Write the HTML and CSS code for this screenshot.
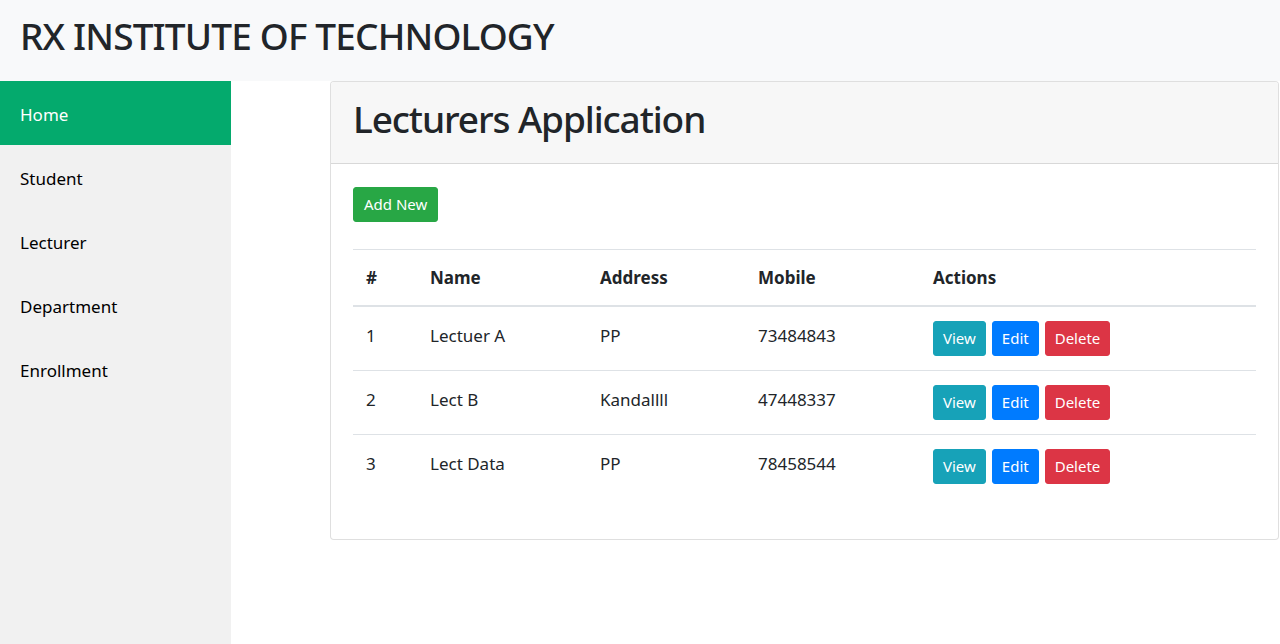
FILE: index.html
```html
<!DOCTYPE html>
<html lang="en">
<head>
<meta charset="utf-8">
<title>Lecturers Application</title>
<link rel="stylesheet" href="styles.css">
</head>
<body>
<header class="topbar">
  <h1 class="brand">RX INSTITUTE OF TECHNOLOGY</h1>
</header>
<div class="layout">
  <nav class="sidebar">
    <a class="nav-link active" href="#">Home</a>
    <a class="nav-link" href="#">Student</a>
    <a class="nav-link" href="#">Lecturer</a>
    <a class="nav-link" href="#">Department</a>
    <a class="nav-link" href="#">Enrollment</a>
  </nav>
  <main class="content">
    <section class="card">
      <div class="card-header">
        <h1 class="card-title">Lecturers Application</h1>
      </div>
      <div class="card-body">
        <div class="toolbar">
          <a class="btn btn-success" href="#">Add New</a>
        </div>
        <table class="table">
          <colgroup>
            <col class="c-num">
            <col class="c-name">
            <col class="c-addr">
            <col class="c-mobile">
            <col>
          </colgroup>
          <thead>
            <tr><th>#</th><th>Name</th><th>Address</th><th>Mobile</th><th>Actions</th></tr>
          </thead>
          <tbody>
            <tr>
              <td>1</td><td>Lectuer A</td><td>PP</td><td>73484843</td>
              <td><div class="actions"><a class="btn btn-info" href="#">View</a><a class="btn btn-primary" href="#">Edit</a><a class="btn btn-danger" href="#">Delete</a></div></td>
            </tr>
            <tr>
              <td>2</td><td>Lect B</td><td>Kandallll</td><td>47448337</td>
              <td><div class="actions"><a class="btn btn-info" href="#">View</a><a class="btn btn-primary" href="#">Edit</a><a class="btn btn-danger" href="#">Delete</a></div></td>
            </tr>
            <tr>
              <td>3</td><td>Lect Data</td><td>PP</td><td>78458544</td>
              <td><div class="actions"><a class="btn btn-info" href="#">View</a><a class="btn btn-primary" href="#">Edit</a><a class="btn btn-danger" href="#">Delete</a></div></td>
            </tr>
          </tbody>
        </table>
      </div>
    </section>
  </main>
</div>
</body>
</html>
```
FILE: styles.css
```css
* { box-sizing: border-box; }

html, body {
  margin: 0;
  height: 100%;
}

body {
  font-family: "Noto Sans", "Open Sans", "Liberation Sans", sans-serif;
  font-size: 17px;
  line-height: 1.5;
  color: #212529;
  background: #fff;
  display: flex;
  flex-direction: column;
}

.topbar {
  background: #f8f9fa;
  height: 81px;
  padding: 0 20px 8px;
  display: flex;
  align-items: center;
  flex-shrink: 0;
}

.brand {
  margin: 0;
  font-size: 37px;
  font-weight: 500;
  line-height: 1.2;
  letter-spacing: -0.85px;
}

.layout {
  flex: 1;
  display: flex;
  align-items: stretch;
}

.sidebar {
  width: 231px;
  flex-shrink: 0;
  background: #f1f1f1;
  display: flex;
  flex-direction: column;
}

.nav-link {
  display: block;
  height: 64px;
  line-height: 64px;
  padding: 2px 20px 0;
  color: #000;
  text-decoration: none;
  font-size: 17px;
}

.nav-link.active {
  background: #04aa6d;
  color: #fff;
}

.content {
  flex: 1;
  padding: 0 1px 0 99px;
}

.card {
  border: 1px solid rgba(0, 0, 0, 0.125);
  border-radius: 4px;
  background: #fff;
  overflow: hidden;
}

.card-header {
  background: #f7f7f7;
  border-bottom: 1px solid rgba(0, 0, 0, 0.125);
  height: 82px;
  padding: 0 22px 6px;
  display: flex;
  align-items: center;
}

.card-title {
  margin: 0;
  font-size: 37px;
  font-weight: 500;
  line-height: 1.2;
  letter-spacing: -1.1px;
}

.card-body {
  padding: 23px 22px 24px;
}

.toolbar {
  display: flex;
  margin-bottom: 27px;
}

.btn {
  display: inline-block;
  font-size: 15px;
  line-height: 23px;
  padding: 5px 9px;
  border: 1px solid transparent;
  border-radius: 3px;
  color: #fff;
  text-decoration: none;
  white-space: nowrap;
}

.btn-success { background: #28a745; border-color: #28a745; padding: 5px 10px; }
.btn-info { background: #17a2b8; border-color: #17a2b8; }
.btn-primary { background: #007bff; border-color: #007bff; }
.btn-danger { background: #dc3545; border-color: #dc3545; }

.table {
  width: 100%;
  border-collapse: collapse;
  table-layout: fixed;
  margin-bottom: 17px;
}

.c-num { width: 64px; }
.c-name { width: 170px; }
.c-addr { width: 158px; }
.c-mobile { width: 175px; }

.table th,
.table td {
  text-align: left;
  vertical-align: top;
  padding: 14px 13px;
  line-height: 27px;
  border-top: 1px solid #dee2e6;
}

.table th {
  font-weight: 700;
  font-size: 17px;
}

.table tbody td {
  padding-top: 15px;
  padding-bottom: 13px;
}

.table thead th {
  border-bottom: 2px solid #dee2e6;
}

.table tbody td:last-child {
  padding-top: 14px;
  padding-bottom: 14px;
}

.actions {
  display: flex;
}

.actions .btn + .btn {
  margin-left: 6px;
}

.actions .btn-danger {
  margin-left: 5px;
}
```
